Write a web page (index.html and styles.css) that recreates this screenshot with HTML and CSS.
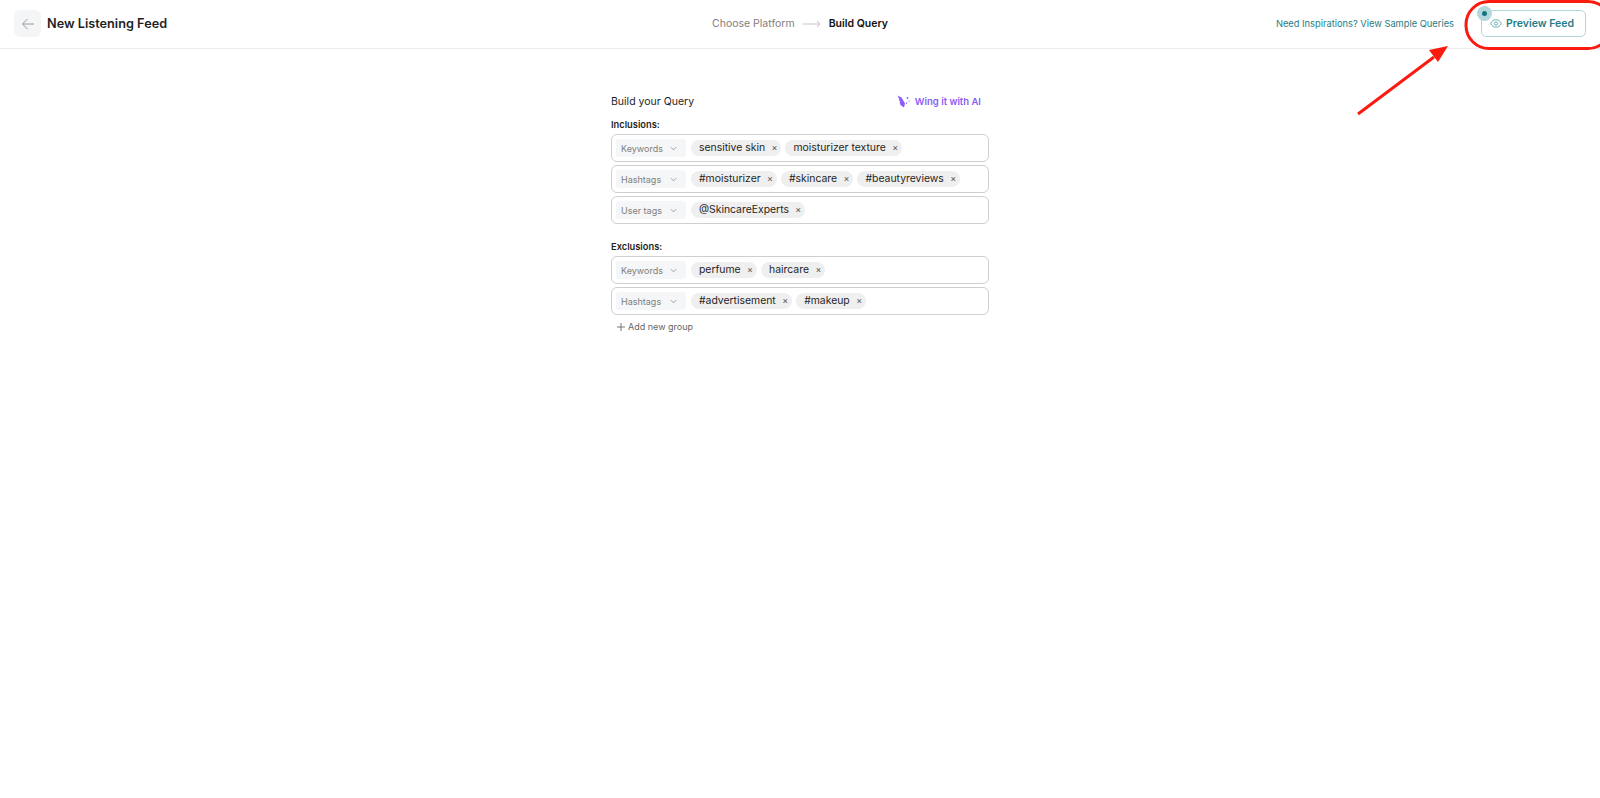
FILE: index.html
```html
<!DOCTYPE html>
<html lang="en">
<head>
  <meta charset="UTF-8">
  <meta name="viewport" content="width=device-width, initial-scale=1.0">
  <title>New Listening Feed</title>
  <link rel="stylesheet" href="styles.css">
</head>
<body>
  <div class="header">
    <div class="header-left">
      <div class="back-btn">
        <svg width="14" height="14" viewBox="0 0 14 14" fill="none" stroke="#9a9a9a" stroke-width="1">
          <path d="M13 7H1.5M6.5 2L1.5 7l5 5"></path>
        </svg>
      </div>
      <h1>New Listening Feed</h1>
    </div>
    <div class="stepper">
      <span class="step">Choose Platform</span>
      <svg width="18" height="8" viewBox="0 0 18 8" fill="none" stroke="#c4c4c4" stroke-width="1">
        <path d="M0 4h17M14 1l3 3-3 3"></path>
      </svg>
      <span class="step active">Build Query</span>
    </div>
    <div class="header-right">
      <span class="sample-link">Need Inspirations? View Sample Queries</span>
      <div class="preview-btn">
        <span class="pulse"><span class="pulse-dot"></span></span>
        <svg width="12" height="9" viewBox="0 0 13 10" fill="none" stroke="#4f9aa3" stroke-width="0.9">
          <path d="M0.6 5C2 2.2 4 0.8 6.5 0.8S11 2.2 12.4 5C11 7.8 9 9.2 6.5 9.2S2 7.8 0.6 5z"></path>
          <circle cx="6.5" cy="5" r="1.8"></circle>
        </svg>
        <span>Preview Feed</span>
      </div>
    </div>
  </div>

  <div class="container">
    <div class="query-head">
      <span class="query-title">Build your Query</span>
      <span class="wing-it">
        <svg width="13" height="13" viewBox="0 0 13 13" fill="#8b5cf6">
          <path d="M0.5 0.5L4.5 2.5l3.5 6-1 4L3.5 10 2.5 7H3.500L1.500 4.500H2.500z"></path>
          <circle cx="10.5" cy="3" r="0.9"></circle>
          <circle cx="12.2" cy="6" r="0.6"></circle>
          <circle cx="9.5" cy="8" r="0.8"></circle>
        </svg>
        Wing it with AI
      </span>
    </div>

    <div class="group-label">Inclusions:</div>
    <div class="rows">
      <div class="query-row">
        <div class="type-select">Keywords <svg class="chevron" viewBox="0 0 8 5"><path d="M1 1l3 3 3-3"></path></svg></div>
        <span class="chip">sensitive skin <span class="chip-x">×</span></span>
        <span class="chip">moisturizer texture <span class="chip-x">×</span></span>
      </div>
      <div class="query-row">
        <div class="type-select">Hashtags <svg class="chevron" viewBox="0 0 8 5"><path d="M1 1l3 3 3-3"></path></svg></div>
        <span class="chip">#moisturizer <span class="chip-x">×</span></span>
        <span class="chip">#skincare <span class="chip-x">×</span></span>
        <span class="chip">#beautyreviews <span class="chip-x">×</span></span>
      </div>
      <div class="query-row">
        <div class="type-select">User tags <svg class="chevron" viewBox="0 0 8 5"><path d="M1 1l3 3 3-3"></path></svg></div>
        <span class="chip">@SkincareExperts <span class="chip-x">×</span></span>
      </div>
    </div>

    <div class="group-label exclusions">Exclusions:</div>
    <div class="rows">
      <div class="query-row">
        <div class="type-select">Keywords <svg class="chevron" viewBox="0 0 8 5"><path d="M1 1l3 3 3-3"></path></svg></div>
        <span class="chip">perfume <span class="chip-x">×</span></span>
        <span class="chip">haircare <span class="chip-x">×</span></span>
      </div>
      <div class="query-row">
        <div class="type-select">Hashtags <svg class="chevron" viewBox="0 0 8 5"><path d="M1 1l3 3 3-3"></path></svg></div>
        <span class="chip">#advertisement <span class="chip-x">×</span></span>
        <span class="chip">#makeup <span class="chip-x">×</span></span>
      </div>
    </div>

    <div class="add-group">
      <svg width="8" height="8" viewBox="0 0 8 8" fill="none" stroke="#666" stroke-width="0.9"><path d="M4 0v8M0 4h8"></path></svg>
      Add new group
    </div>
  </div>

  <!-- red annotation drawn over the screenshot -->
  <svg class="annotation" width="1600" height="798" viewBox="0 0 1600 798" fill="none">
    <rect x="1466" y="1.5" width="145" height="47" rx="23" stroke="#fb1a0e" stroke-width="3"></rect>
    <path d="M1358 114L1434 57" stroke="#fb1a0e" stroke-width="3"></path>
    <path d="M1448 46L1429 50 1438 62z" fill="#fb1a0e"></path>
  </svg>
</body>
</html>
```

FILE: styles.css
```css
:root {
  --text-color: #1f1f1f;
  --secondary-text: #7f7f7f;
  --teal: #1f7c87;
  --border-color: #cfcfcf;
  --chip-bg: #efefef;
  --select-bg: #f5f6f7;
  --purple: #8b5cf6;
}

* {
  margin: 0;
  padding: 0;
  box-sizing: border-box;
}

body {
  font-family: 'Inter', sans-serif;
  color: var(--text-color);
  background-color: #fff;
  height: 798px;
  overflow: hidden;
  position: relative;
}

.header {
  height: 49px;
  padding: 0 14px 1px;
  border-bottom: 1px solid #ececec;
  display: grid;
  grid-template-columns: 1fr auto 1fr;
  align-items: center;
}

.header-left {
  display: flex;
  align-items: center;
  gap: 6px;
}

.back-btn {
  width: 27px;
  height: 27px;
  border-radius: 6px;
  background-color: #f4f5f6;
  display: flex;
  align-items: center;
  justify-content: center;
}

.header h1 {
  font-size: 12.7px;
  font-weight: 600;
}

.stepper {
  display: flex;
  align-items: center;
  gap: 8px;
  font-size: 10.5px;
}

.step {
  color: #808080;
}

.step.active {
  color: #111;
  font-weight: 600;
}

.header-right {
  display: flex;
  align-items: center;
  justify-content: flex-end;
  gap: 27px;
}

.sample-link {
  font-size: 9.3px;
  color: var(--teal);
}

.preview-btn {
  position: relative;
  width: 105px;
  height: 27px;
  padding-right: 3px;
  border: 1px solid #b5d5d9;
  border-radius: 5px;
  font-size: 10.5px;
  font-weight: 600;
  color: var(--teal);
  display: flex;
  align-items: center;
  justify-content: center;
  gap: 4px;
}

.pulse {
  position: absolute;
  left: -5px;
  top: -5px;
  width: 15px;
  height: 15px;
  border-radius: 50%;
  background-color: #b4d8dc;
  display: flex;
  align-items: center;
  justify-content: center;
}

.pulse-dot {
  width: 5px;
  height: 5px;
  border-radius: 50%;
  background-color: #1a7480;
}

.container {
  width: 378px;
  margin: 43px 0 0 611px;
}

.query-head {
  display: flex;
  align-items: center;
  justify-content: space-between;
  padding-right: 8px;
  height: 18px;
}

.query-title {
  font-size: 10.5px;
}

.wing-it {
  display: flex;
  align-items: center;
  gap: 5px;
  font-size: 9.5px;
  font-weight: 600;
  color: var(--purple);
}

.group-label {
  font-size: 9.3px;
  font-weight: 600;
  margin-top: 9px;
  margin-bottom: 4px;
  line-height: 11px;
}

.group-label.exclusions {
  margin-top: 17px;
}

.rows {
  display: flex;
  flex-direction: column;
  gap: 3px;
}

.query-row {
  height: 28px;
  border: 1px solid var(--border-color);
  border-radius: 6px;
  padding: 0 4px;
  display: flex;
  align-items: center;
  gap: 4px;
}

.type-select {
  width: 70px;
  height: 18px;
  margin-right: 1px;
  padding: 0 7px 0 5px;
  border-radius: 3px;
  background-color: var(--select-bg);
  color: var(--secondary-text);
  font-size: 9px;
  display: flex;
  align-items: center;
  justify-content: space-between;
}

.chevron {
  width: 7px;
  height: 5px;
  margin-right: 2px;
  fill: none;
  stroke: #888;
  stroke-width: 0.9;
}

.chip {
  height: 16px;
  margin-top: -1px;
  padding: 0 4px 0 8px;
  border-radius: 8px;
  background-color: var(--chip-bg);
  font-size: 10.4px;
  display: flex;
  align-items: center;
  gap: 3.5px;
  white-space: pre;
}

.chip-x {
  font-size: 9px;
  color: #555;
}

.add-group {
  margin-top: 6px;
  padding-left: 6px;
  font-size: 9px;
  color: #666;
  display: flex;
  align-items: center;
  gap: 3px;
}

.annotation {
  position: absolute;
  left: 0;
  top: 0;
  pointer-events: none;
}
```
